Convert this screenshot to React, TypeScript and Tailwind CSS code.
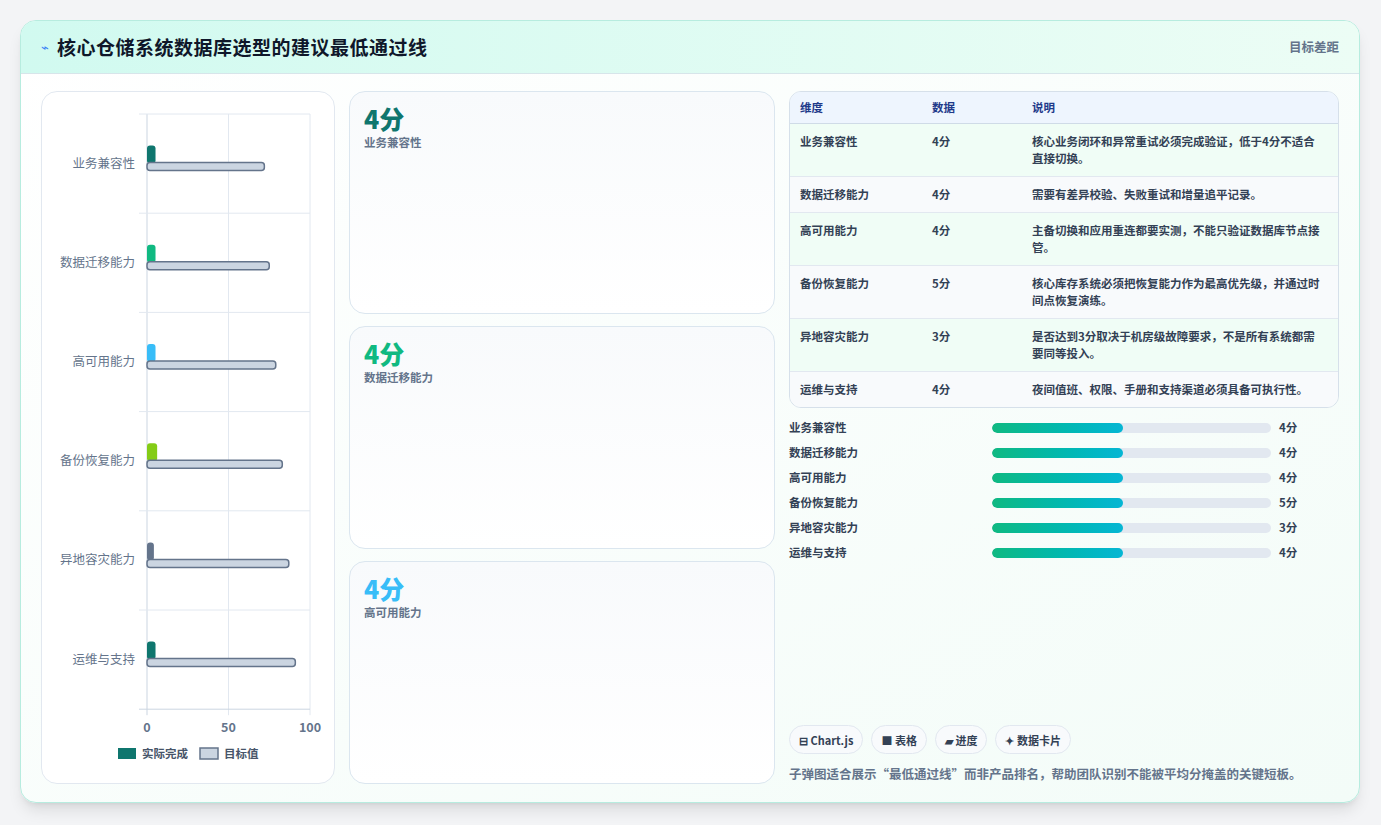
const rows = [
  { name: "业务兼容性", score: "4分", actual: 4, target: 72, color: "#0f766e", note: "核心业务闭环和异常重试必须完成验证，低于4分不适合直接切换。" },
  { name: "数据迁移能力", score: "4分", actual: 4, target: 75, color: "#10b981", note: "需要有差异校验、失败重试和增量追平记录。" },
  { name: "高可用能力", score: "4分", actual: 4, target: 79, color: "#38bdf8", note: "主备切换和应用重连都要实测，不能只验证数据库节点接管。" },
  { name: "备份恢复能力", score: "5分", actual: 5, target: 83, color: "#84cc16", note: "核心库存系统必须把恢复能力作为最高优先级，并通过时间点恢复演练。" },
  { name: "异地容灾能力", score: "3分", actual: 3, target: 87, color: "#64748b", note: "是否达到3分取决于机房级故障要求，不是所有系统都需要同等投入。" },
  { name: "运维与支持", score: "4分", actual: 4, target: 91, color: "#0f766e", note: "夜间值班、权限、手册和支持渠道必须具备可执行性。" },
];

const Chart = () => {
  const x0 = 105, x1 = 268, top = 22, band = 99.2;
  const sx = (v: number) => x0 + ((x1 - x0) * v) / 100;
  return (
    <svg width="294" height="691" className="block">
      {[0, 50, 100].map((v) => (
        <line key={v} x1={sx(v)} x2={sx(v)} y1={top} y2={top + band * 6 + 6} stroke={v === 0 ? "#cbd5e1" : "#e2e8f0"} />
      ))}
      {[0, 1, 2, 3, 4, 5, 6].map((i) => (
        <line key={i} x1={x0 - 8} x2={x1} y1={top + band * i} y2={top + band * i} stroke={i === 6 ? "#cbd5e1" : "#e2e8f0"} />
      ))}
      {rows.map((r, i) => {
        const cy = top + band * i + band / 2;
        return (
          <g key={r.name}>
            <text x={x0 - 12} y={cy + 4} textAnchor="end" fontSize="12.5" fill="#64748b">{r.name}</text>
            <rect x={x0} y={cy - 18} width={sx(r.actual) - x0 + 2} height={18} rx="3" fill={r.color} />
            <rect x={x0} y={cy - 1} width={sx(r.target) - x0} height={8} rx="3" fill="#cbd5e1" stroke="#64748b" strokeWidth="1.5" />
          </g>
        );
      })}
      {[0, 50, 100].map((v) => (
        <text key={v} x={sx(v)} y={640} textAnchor="middle" fontSize="12.5" fontWeight="bold" fill="#64748b">{v}</text>
      ))}
      <rect x={76} y={656} width={18} height={11} fill="#0f766e" />
      <text x={100} y={666} fontSize="11.5" fontWeight="bold" fill="#475569">实际完成</text>
      <rect x={158} y={656} width={18} height={11} fill="#cbd5e1" stroke="#64748b" strokeWidth="1.5" />
      <text x={182} y={666} fontSize="11.5" fontWeight="bold" fill="#475569">目标值</text>
    </svg>
  );
};

const cards = [
  { v: "4分", l: "业务兼容性", c: "text-[#0f766e]" },
  { v: "4分", l: "数据迁移能力", c: "text-[#10b981]" },
  { v: "4分", l: "高可用能力", c: "text-[#38bdf8]" },
];

export default function App() {
  return (
    <div className="min-h-screen bg-[#f3f4f6] p-5 pb-0" style={{ fontFamily: '"Noto Sans CJK SC", "Noto Sans", sans-serif' }}>
      <div className="w-[1340px] h-[783px] rounded-2xl border border-[#b7ecdf] bg-gradient-to-br from-white to-[#f3fcf8] shadow-lg overflow-hidden flex flex-col">
        <div className="h-[55px] flex items-center justify-between px-5 bg-gradient-to-r from-[#d1faf0] to-[#ecfdf5] border-b border-[#d7e5ea]">
          <div className="flex items-center gap-2">
            <span className="text-[13px] text-[#3b82f6]">⌁</span>
            <h1 className="text-[19px] font-bold text-[#0f172a] tracking-[0.5px]">核心仓储系统数据库选型的建议最低通过线</h1>
          </div>
          <span className="text-[12.5px] font-bold text-[#64748b]">目标差距</span>
        </div>
        <div className="flex-1 flex gap-[14px] px-5 pt-[17px] pb-[18px]">
          <div className="w-[294px] rounded-2xl border border-[#e2e8f0] bg-white overflow-hidden">
            <Chart />
          </div>
          <div className="w-[426px] flex flex-col gap-3">
            {cards.map((c) => (
              <div key={c.l} className="flex-1 rounded-2xl border border-[#dbe6ef] bg-gradient-to-b from-[#f8fafc] to-white px-[14px] pt-[10px]">
                <div className={`text-[25px] font-extrabold leading-8 ${c.c}`}>{c.v}</div>
                <div className="text-[11.5px] font-bold text-[#64748b]">{c.l}</div>
              </div>
            ))}
          </div>
          <div className="flex-1 flex flex-col">
            <div className="rounded-xl border border-[#d6e0ea] overflow-hidden text-[11.5px] font-bold text-[#334155]">
              <div className="grid grid-cols-[132px_100px_1fr] h-8 items-center px-[10px] bg-[#eef5fe] text-[#1e3a8a] border-b border-[#cfdbe7]">
                <span>维度</span><span>数据</span><span>说明</span>
              </div>
              {rows.map((r, i) => (
                <div key={r.name} className={`grid grid-cols-[132px_100px_1fr] px-[10px] py-[9px] leading-[17px] ${i < 5 ? "border-b border-[#e2e8f0]" : ""} ${i % 2 === 0 ? "bg-[#f0fdf6]" : "bg-[#f8fafc]"}`}>
                  <span>{r.name}</span><span>{r.score}</span><span className="pr-2">{r.note}</span>
                </div>
              ))}
            </div>
            <div className="mt-[12px] flex flex-col gap-[9px]">
              {rows.map((r) => (
                <div key={r.name} className="flex items-center h-4 text-[11.5px] font-bold text-[#334155]">
                  <span className="w-[203px]">{r.name}</span>
                  <div className="w-[279px] h-[10px] rounded-full bg-[#e2e8f0] overflow-hidden">
                    <div className="h-full w-[47%] rounded-full bg-gradient-to-r from-[#10b981] to-[#06b6d4]" />
                  </div>
                  <span className="ml-2">{r.score}</span>
                </div>
              ))}
            </div>
            <div className="mt-auto flex gap-2 text-[11px] font-bold text-[#334155]">
              {["⊟ Chart.js", "■ 表格", "▰ 进度", "✦ 数据卡片"].map((t) => (
                <span key={t} className="h-[29px] px-[9px] flex items-center rounded-full border border-[#e2e8f0] bg-[#f8fafc]">{t}</span>
              ))}
            </div>
            <p className="mt-[11px] text-[12.5px] font-bold text-[#64748b]">子弹图适合展示“最低通过线”而非产品排名，帮助团队识别不能被平均分掩盖的关键短板。</p>
          </div>
        </div>
      </div>
    </div>
  );
}
